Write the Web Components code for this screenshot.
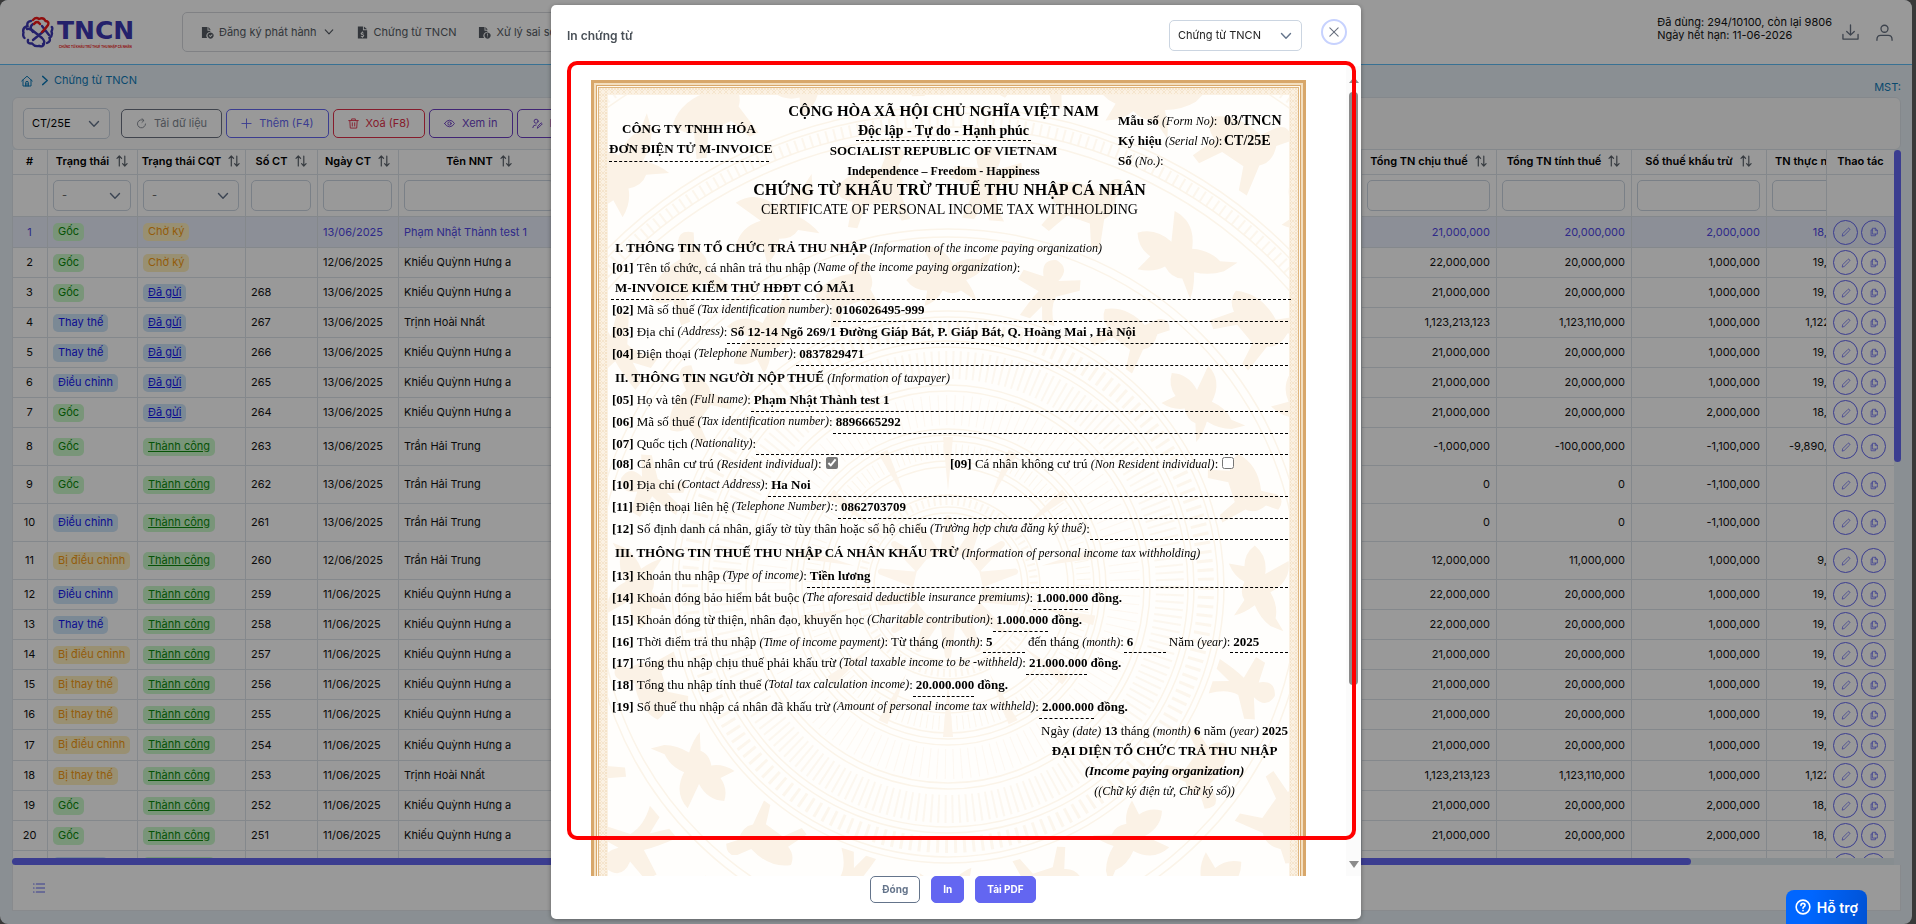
<!DOCTYPE html>
<html lang="vi">
<head>
<meta charset="utf-8">
<meta name="viewport" content="width=device-width, initial-scale=1">
<title>Chứng từ TNCN</title>
<style>
html, body { height: 100%; margin: 0; }
body { background: #606060; font: 11px/13px Inter, "Noto Sans", sans-serif; color: #111; overflow: hidden; }
</style>
</head>
<body>
<tncn-app></tncn-app>

<script>
const define = (name, html, setup) => {
  const tpl = document.createElement('template');
  tpl.innerHTML = `<style>*,*::before,*::after{box-sizing:border-box}button,input,select{font:inherit;margin:0}a{color:inherit;text-decoration:none}svg{display:block;flex:none}</style>${html}`;
  customElements.define(name, class extends HTMLElement {
    connectedCallback() {
      if (this.shadowRoot) return;
      const root = this.attachShadow({ mode: 'open' });
      root.append(tpl.content.cloneNode(true));
      if (setup) setup(this, root);
    }
  });
};

/* ---------- icons ---------- */
const stroke = (vb, d, w = 1) => `<svg viewBox="${vb}" width="100%" height="100%" fill="none" stroke="currentColor" stroke-width="${w}" stroke-linecap="round" stroke-linejoin="round">${d}</svg>`;
const fill = (vb, d) => `<svg viewBox="${vb}" width="100%" height="100%" fill="currentColor" fill-rule="evenodd">${d}</svg>`;
const ICONS = {
  chevron: stroke('0 0 12 12', '<path d="M1.500 3.500L6 8.200l4.500-4.700"/>', 1.4),
  next: stroke('0 0 12 12', '<path d="M4 1.500l5 4.500-5 4.500"/>', 1.6),
  home: stroke('0 0 12 12', '<path d="M.7 6L6 1.200 11.300 6M2 5v6h8V5M4.600 11V7.500q0-1.100 1.400-1.100t1.400 1.100V11M6 8v3"/>', 1),
  reload: stroke('0 0 12 12', '<path d="M8.500 2.700A4.400 4.400 0 1 0 10.400 6.500M6.500.700L8.700 2.700 6.500 4.800"/>', 1),
  plus: stroke('0 0 12 12', '<path d="M6 1v10M1 6h10"/>', 1),
  trash: stroke('0 0 12 12', '<path d="M.8 2.800h10.400M4 2.600V1h4v1.600M2 3l.5 8h7L10 3M4.700 5.200v3.600M7.300 5.200v3.600"/>', 1),
  eye: stroke('0 0 12 12', '<path d="M.6 6Q2.800 2.400 6 2.400T11.400 6Q9.200 9.600 6 9.600T.6 6z"/><circle cx="6" cy="6" r="1.800"/>', 1),
  sign: stroke('0 0 12 12', '<circle cx="4.500" cy="3.500" r="2.200"/><path d="M.8 10.500Q.8 7.500 4.500 7.500M6 10.800l.4-1.800L10 5.200l1.200 1.200L7.600 10z"/>', 1),
  sort: stroke('0 0 12 12', '<path d="M3.300 11V1M1 3.300L3.300 1l2.300 2.300M8.800 1v10M6.600 8.700L8.800 11l2.300-2.300"/>', 1.2),
  download: stroke('0 0 18 18', '<path d="M1 11v5h16v-5M9 1v10.500M5 8l4 3.800L13 8"/>', 1.4),
  user: stroke('0 0 18 18', '<circle cx="9" cy="5" r="3.700"/><path d="M1 17.300v-1q0-4.300 4-4.300h8q4 0 4 4.300v1"/>', 1.4),
  pencil: stroke('0 0 12 12', '<path d="M1.500 10.500l.6-2.600L8.400 1.600q.7-.6 1.400 0l.6.6q.6.7 0 1.400L4.100 9.900z"/>', .9),
  copy: stroke('0 0 12 12', '<path d="M4.500 1.500h3.200l2.300 2.300v4.700H4.500zM7.500 1.600V4h2.400M4.400 3.500H2.500v7h5.200V8.600"/>', .9),
  close: stroke('0 0 12 12', '<path d="M1 1l10 10M11 1L1 11"/>', 1.3),
  list: stroke('0 0 12 12', '<path d="M3.300 2H12M3.300 6H12M3.300 10H12M.5 2h.6M.5 6h.6M.5 10h.6"/>', 1.1),
  docCheck: fill('0 0 14 14', '<path d="M1 1h6v4h3v1.600A4 4 0 0 0 6.500 13H1zM8 1l2.500 3H8z"/><path d="M10.300 7a3.300 3.300 0 1 0 .01 0zM8.500 10.400l.7-.7.9.9 1.700-1.700.7.7-2.400 2.400z"/>'),
  docMoney: fill('0 0 14 14', '<path d="M2 .5h5.500v4H12V13.500H2zM8.500.5L12 3.600H8.500zM6.400 6v.8Q5 7 5 8.200t1.600 1.500q1.200.3 1.200.7t-.9.500q-.8 0-1.400-.4l-.5.8q.6.400 1.400.500v.9h1v-.9q1.500-.2 1.500-1.500T7.300 8.800Q6.200 8.500 6.200 8.200t.8-.4q.7 0 1.200.300l.4-.8q-.5-.3-1.200-.4V6z"/>'),
  docInfo: fill('0 0 14 14', '<path d="M1 1h6v4h3v1.600A4 4 0 0 0 6.500 13H1zM8 1l2.500 3H8z"/><path d="M10.300 7a3.300 3.300 0 1 0 .01 0zM9.900 8.200h.9v2.300h-.9zM9.900 11.200h.9v.9h-.9z"/>'),
  help: stroke('0 0 18 18', '<circle cx="9" cy="9" r="7.700"/><path d="M6.700 7.200q0-2.300 2.300-2.300t2.300 2.100q0 1.200-1.200 1.800-1.100.6-1.100 1.700M9 13v.1"/>', 1.8)
};
define('ui-icon', `<style>:host{display:inline-block;flex:none;width:12px;height:12px}</style>`,
  (el, root) => root.append(document.createRange().createContextualFragment(ICONS[el.getAttribute('name')] || '')));

/* ---------- form pieces ---------- */
define('ui-select', `<style>
  :host{display:block}
  .box{display:grid;align-items:center;height:31px}
  select{grid-area:1/1;width:100%;height:100%;appearance:none;background:#fff;border:1px solid #cbd5e1;border-radius:5px;padding:0 26px 0 8px;color:inherit}
  ui-icon{grid-area:1/1;justify-self:end;margin-right:10px;color:#64748b;pointer-events:none}
</style><div class="box"><select></select><ui-icon name="chevron"></ui-icon></div>`, (el, root) => {
  const s = root.querySelector('select');
  s.setAttribute('aria-label', el.getAttribute('label') || '');
  s.add(new Option(el.getAttribute('value')));
});

define('ui-button', `<style>
  :host{display:block;--c:#6b7280}
  button{display:flex;align-items:center;gap:7px;height:29px;padding:0 14px;border:1px solid var(--c);border-radius:5px;background:#fff;color:var(--t,var(--c));white-space:nowrap}
  ui-icon{width:11px;height:11px}
</style><button type="button"><ui-icon></ui-icon><slot></slot></button>`, (el, root) => {
  const i = document.createElement('ui-icon');
  i.setAttribute('name', el.getAttribute('icon'));
  root.querySelector('ui-icon').replaceWith(i);
});

/* ---------- header ---------- */
define('brand-logo', `<style>
  :host{display:flex;align-items:center;gap:3px}
  .words{display:flex;flex-direction:column}
  b{font:bold 25px/29px "DejaVu Sans",sans-serif;color:#3c37b2}
  small{font:bold 3px/4px Inter,sans-serif;color:#f01818;padding-left:2px;white-space:nowrap}
</style>
<svg viewBox="0 0 32 32" width="32" height="32" fill="none" stroke-width="2.400" stroke-linecap="round">
  <g stroke="#3c37b2">
    <path d="M9 5Q4.500 5.500 5.500 10 0 12 1.500 16.500.5 20 2.500 22M6 24q-1 4 4 3.500Q13 31 17 29.800 21 31.500 22 28M25 27q4-1.500 2.500-5Q31 19.500 29.500 15.500 31 12 29.800 11"/>
    <path d="M11 8q-4 3-1 6l10 8q4 4 1 6M22 15l-11 9M5 13q4-1 6 3M20 10l7 9"/>
  </g>
  <path stroke="#f01818" d="M11 4Q14 .800 17 3q4.500-2 6.500 2 4 .500 2.500 4-2 3-6 7M12 8q3-4 6 0"/>
</svg>
<span class="words"><b>TNCN</b><small>CHỨNG TỪ KHẤU TRỪ THUẾ THU NHẬP CÁ NHÂN</small></span>`);

define('top-bar', `<style>
  :host{display:flex;align-items:center;height:65px;padding:0 19px 0 22px;background:#fff;border-bottom:1px solid #5ebcf5;border-radius:8px 8px 0 0}
  brand-logo{width:160px;flex:none}
  nav{display:flex;align-items:center;flex:0 1 50%;height:40px;padding:0 18px;gap:22px;border:1px solid #d5d8dd;border-radius:5px;color:#555b63}
  nav a{display:flex;align-items:center;gap:5px;white-space:nowrap}
  nav ui-icon{width:13px;height:13px}
  nav ui-icon[name=chevron]{width:10px;height:10px;margin-left:2px}
  .usage{margin:0 10px 0 auto;padding-bottom:7px}
  .usage span{display:block}
  .tools{display:flex;gap:17px;color:#667080}
  .tools button{display:block;border:0;padding:0;background:none;color:inherit}
  .tools ui-icon{width:17px;height:17px;display:block}
</style>
<brand-logo></brand-logo>
<nav>
  <a href="#"><ui-icon name="docCheck"></ui-icon>Đăng ký phát hành<ui-icon name="chevron"></ui-icon></a>
  <a href="#"><ui-icon name="docMoney"></ui-icon>Chứng từ TNCN</a>
  <a href="#"><ui-icon name="docInfo"></ui-icon>Xử lý sai sót</a>
</nav>
<div class="usage"><span>Đã dùng: 294/10100, còn lại 9806</span><span>Ngày hết hạn: 11-06-2026</span></div>
<div class="tools">
  <button aria-label="Tải xuống"><ui-icon name="download"></ui-icon></button>
  <button aria-label="Tài khoản"><ui-icon name="user"></ui-icon></button>
</div>`);

define('crumb-bar', `<style>
  :host{display:flex;align-items:center;height:32px;padding:0 11px 1px 21px;color:#0f7ab8}
  ui-icon[name=next]{width:11px;height:11px;margin:0 4px 0 6px}
  .mst{margin-left:auto;align-self:flex-end;padding-bottom:2px}
  a{display:flex}
</style>
<a href="#" aria-label="Trang chủ"><ui-icon name="home"></ui-icon></a><ui-icon name="next"></ui-icon><a href="#">Chứng từ TNCN</a><span class="mst">MST:</span>`);

/* ---------- toolbar ---------- */
define('grid-toolbar', `<style>
  :host{display:flex;align-items:center;gap:4px;height:53px;padding:0 10px;background:#fbfbfb;border:1px solid #dde3ea;border-radius:6px}
  ui-select{width:87px;margin-right:7px;color:#000}
</style>
<ui-select label="Ký hiệu" value="CT/25E"></ui-select>
<ui-button icon="reload" style="--c:#6b7280;--t:#80868f">Tải dữ liệu</ui-button>
<ui-button icon="plus" style="--c:#6366f1">Thêm (F4)</ui-button>
<ui-button icon="trash" style="--c:#e0304a">Xoá (F8)</ui-button>
<ui-button icon="eye" style="--c:#6d3fc4">Xem in</ui-button>
<ui-button icon="sign" style="--c:#6d3fc4">Ký điện tử</ui-button>`);

/* ---------- data grid ---------- */
define('status-chip', `<style>
  :host{display:inline-block;padding:2px 5px 3px;border-radius:5px;line-height:13px;white-space:nowrap;vertical-align:middle}
  :host([tone=green]){background:#caf9ca;color:#0b8a0b}
  :host([tone=orange]){background:#fff0bf;color:#f59a10}
  :host([tone=blue]){background:#cde4f8;color:#1414f0}
  a{text-decoration:underline}
</style><slot></slot>`, (el, root) => {
  if (!el.hasAttribute('link')) return;
  const a = document.createElement('a');
  a.href = '#';
  a.append(root.querySelector('slot'));
  root.append(a);
});

define('row-actions', `<style>
  :host{display:flex;gap:3px}
  button{display:grid;place-items:center;width:25px;height:25px;padding:0;border:1px solid #6366f1;border-radius:50%;background:none;color:#6366f1}
  ui-icon{width:10px;height:10px}
</style>
<button aria-label="Sửa"><ui-icon name="pencil"></ui-icon></button><button aria-label="Sao chép"><ui-icon name="copy"></ui-icon></button>`);

const K = 'Khiếu Quỳnh Hưng a', T = 'Trần Hải Trung', N = 'Trịnh Hoài Nhất';
const A = ['21,000,000', '20,000,000', '1,000,000', '19,000,000'];
const B = ['21,000,000', '20,000,000', '2,000,000', '18,000,000'];
const C = ['22,000,000', '20,000,000', '1,000,000', '19,000,000'];
const D = ['1,123,213,123', '1,123,110,000', '1,000,000', '1,122,213,123'];
const Z = ['0', '0', '-1,100,000', ''];
const ROWS = [
  ['Gốc', 'Chờ ký', '', '13/06/2025', 'Phạm Nhật Thành test 1', B, 'mid'],
  ['Gốc', 'Chờ ký', '', '12/06/2025', K, C],
  ['Gốc', 'Đã gửi', '268', '13/06/2025', K, A],
  ['Thay thế', 'Đã gửi', '267', '13/06/2025', N, D],
  ['Thay thế', 'Đã gửi', '266', '13/06/2025', K, A],
  ['Điều chỉnh', 'Đã gửi', '265', '13/06/2025', K, A],
  ['Gốc', 'Đã gửi', '264', '13/06/2025', K, B],
  ['Gốc', 'Thành công', '263', '13/06/2025', T, ['-1,000,000', '-100,000,000', '-1,100,000', '-9,890,000,000'], 'tall'],
  ['Gốc', 'Thành công', '262', '13/06/2025', T, Z, 'tall'],
  ['Điều chỉnh', 'Thành công', '261', '13/06/2025', T, Z, 'tall'],
  ['Bị điều chỉnh', 'Thành công', '260', '12/06/2025', T, ['12,000,000', '11,000,000', '1,000,000', '9,900,000'], 'tall'],
  ['Điều chỉnh', 'Thành công', '259', '11/06/2025', K, C],
  ['Thay thế', 'Thành công', '258', '11/06/2025', K, C],
  ['Bị điều chỉnh', 'Thành công', '257', '11/06/2025', K, A],
  ['Bị thay thế', 'Thành công', '256', '11/06/2025', K, A],
  ['Bị thay thế', 'Thành công', '255', '11/06/2025', K, A],
  ['Bị điều chỉnh', 'Thành công', '254', '11/06/2025', K, A, 'mid'],
  ['Bị thay thế', 'Thành công', '253', '11/06/2025', N, D],
  ['Gốc', 'Thành công', '252', '11/06/2025', K, B],
  ['Gốc', 'Thành công', '251', '11/06/2025', K, B],
  ['Thay thế', 'Thành công', '', '', '', ['', '', '', '']]
];
const tone = s => /^Bị|Chờ/.test(s) ? 'orange' : /Gốc|Thành/.test(s) ? 'green' : 'blue';
const chip = s => `<status-chip tone="${tone(s)}"${/Đã|Thành/.test(s) ? ' link' : ''}>${s}</status-chip>`;
const head = s => `<th scope="col"><span>${s}<ui-icon name="sort"></ui-icon></span></th>`;
const box = s => `<td><input type="text" aria-label="Lọc ${s}"></td>`;

define('data-grid', `<style>
  :host{display:grid;grid-template-columns:minmax(0,1fr) 7px;grid-template-rows:minmax(0,1fr) 7px;min-height:0}
  .view{overflow:hidden;border-left:1px solid #dde3ea;background:#fff;min-height:0}
  table{width:calc(100% + 50px);table-layout:fixed;border-spacing:0}
  col.n{width:35px}col.s{width:90px}col.q{width:108px}col.c{width:72px}col.d{width:81px}col.t{width:162px}col.m{width:135px}col.k{width:109px}col.a{width:68px}
  th,td{padding:0 6px 0 5px;border-right:1px solid #dde3ea;border-bottom:1px solid #dde3ea;height:30px;background:#fff;white-space:nowrap;overflow:hidden;text-align:left}
  th{height:25px;font-weight:600;color:#000;padding-bottom:2px}
  th span{display:flex;align-items:center;justify-content:center;gap:7px}
  th ui-icon{width:12px;height:12px;color:#5c636c}
  .filters td{height:42px}
  .filters input{display:block;width:100%;height:31px;border:1px solid #cbd5e1;border-radius:5px;background:#fff;padding:0 8px}
  .mid td{height:31px}
  .tall td{height:38px}
  td:first-child,th:first-child{text-align:center}
  td.r{text-align:right}
  td.k{padding-right:4px}
  th:last-child,td:last-child{position:sticky;right:0;padding-left:6px;border-right:0;border-left:1px solid #dde3ea}
  th:last-child{text-align:center}
  .on td{background:#e9eefc;color:#4f46e5}
  ui-select{color:#666}
  .v span,.h span{display:block;background:#6366f1;border-radius:4px}
  .v span{height:44%}
  .h{background:#e2ebf1}
  .h span{width:calc(100% - 203px);height:7px}
</style>
<div class="view"><table>
  <colgroup><col class="n"><col class="s"><col class="q"><col class="c"><col class="d"><col class="t"><col><col class="m"><col class="m"><col class="m"><col class="k"><col class="a"></colgroup>
  <thead>
    <tr><th scope="col">#</th>${['Trạng thái', 'Trạng thái CQT', 'Số CT', 'Ngày CT', 'Tên NNT'].map(head).join('')}<th></th>${['Tổng TN chịu thuế', 'Tổng TN tính thuế', 'Số thuế khấu trừ', 'TN thực nhận'].map(head).join('')}<th scope="col">Thao tác</th></tr>
    <tr class="filters"><td></td><td><ui-select label="Trạng thái" value="-"></ui-select></td><td><ui-select label="Trạng thái CQT" value="-"></ui-select></td>${['Số CT', 'Ngày CT', 'Tên NNT'].map(box).join('')}<td></td>${['Tổng TN chịu thuế', 'Tổng TN tính thuế', 'Số thuế khấu trừ', 'TN thực nhận'].map(box).join('')}<td></td></tr>
  </thead>
  <tbody>${ROWS.map((r, i) => `<tr class="${r[6] || ''}${i ? '' : ' on'}"><td>${i < 20 ? i + 1 : ''}</td><td>${chip(r[0])}</td><td>${chip(r[1])}</td><td>${r[2]}</td><td>${r[3]}</td><td>${r[4]}</td><td></td>${r[5].map((v, j) => `<td class="r${j > 2 ? ' k' : ''}">${v}</td>`).join('')}<td><row-actions></row-actions></td></tr>`).join('')}</tbody>
</table></div>
<div class="v"><span></span></div>
<div class="h"><span></span></div>`);

define('grid-footer', `<style>
  :host{display:flex;align-items:center;height:46px;padding:0 20px;background:#fff;border:1px solid #e3e7ec;border-top:0}
  button{display:block;border:0;padding:0;background:none;color:#6366f1}
  ui-icon{display:block}
</style><button aria-label="Danh sách"><ui-icon name="list"></ui-icon></button>`);

/* ---------- certificate ---------- */
const drum = () => {
  const ring = (r, w, dash, o = 1) => `<circle r="${r}" stroke-width="${w}"${dash ? ` stroke-dasharray="${dash}"` : ''} opacity="${o}"/>`;
  let s = '<g fill="none" stroke="#fbf4e9">';
  [36, 74, 80, 92, 120, 126, 146, 152, 158, 196, 202, 240, 246, 270, 276, 350, 358, 452, 460, 474, 480, 588, 606].forEach(r => s += ring(r, 1.5));
  s += ring(86, 8, '2 4', .8) + ring(136, 14, '1 5', .8) + ring(177, 30, '1 7', .6) + ring(222, 28, '2 5', .7) + ring(258, 16, '3 6', .8) + ring(466, 12, '2 6', .8) + ring(597, 12, '2 6', .8) + '</g><g fill="#fcf4ea">';
  for (let i = 0; i < 14; i++) s += `<path transform="rotate(${i * 360 / 14})" d="M-8-34L-3-70Q0-74 3-70L8-34zM-5-150L0-96 5-150z"/>`;
  s += '</g><g fill="#fbf2e6">';
  const bird = 'M-32 4Q-24-6-10-4L-20-22Q-4-24 4-8 14-14 24-12L34-18 30-8Q24 0 14 4 20 12 22 20L10 12Q4 16-4 12 -8 20-18 24L-16 12Q-26 12-32 4z';
  const deer = 'M-28-4Q-16-16 4-12L10-22Q16-28 22-20L16-12Q20-2 14 4L18 24 12 24 6 10-10 10-18 24-24 22-18 6Q-26 4-28-4z';
  const man = 'M-12 24Q-8 10-4 2L-22-2-20-10-4-10Q-10-22 2-25 14-22 8-10L24-16 26-8 10 2Q8 12 16 24L6 24 2 12-4 24z';
  [[312, 20, 1.3], [405, 24, 1.5], [530, 30, 1.6]].forEach(([r, n, k], j) => {
    for (let i = 0; i < n; i++) s += `<path transform="rotate(${i * 360 / n + j * 5}) translate(0 ${-r}) scale(${k})" d="${[bird, man, deer, bird, deer][(i + j) % 5]}"/>`;
  });
  return s + '</g>';
};

define('drum-backdrop', `<style>:host{display:block;overflow:hidden}svg{width:100%;height:100%}</style>
<svg viewBox="0 0 715 1011" preserveAspectRatio="xMidYMin slice" aria-hidden="true">
  <defs>
    <pattern id="lace" width="6" height="6" patternUnits="userSpaceOnUse"><path d="M0 3L3 0 6 3 3 6z" fill="none" stroke="#f5e5cd" stroke-width="1"/><circle cx="3" cy="3" r="1" fill="#f2dfc2"/></pattern>
  </defs>
  <rect width="715" height="1011" fill="#fffefc"/>
  <g transform="translate(357 507)">${drum()}</g>
  <path fill="#fbf1e3" fill-rule="evenodd" d="M0 0h715v1011H0zM17 15v981h681V15z"/>
  <path fill="url(#lace)" fill-rule="evenodd" d="M0 0h715v1011H0zM16 14v983h683V14z"/>
  <g fill="none">
    <rect x="1.500" y="1.500" width="712" height="1008" stroke="#d8a76a" stroke-width="3"/>
    <rect x="4" y="4" width="707" height="1003" stroke="#f3dfc0" stroke-width="2"/>
    <rect x="5.500" y="5.500" width="704" height="1000" stroke="#d8a76a" stroke-width="1"/>
    <rect x="6.500" y="6.500" width="702" height="998" stroke="#fffaf1" stroke-width="1"/>
    <rect x="7.500" y="7.500" width="700" height="996" stroke="#dfb67f" stroke-width="1"/>
  </g>
</svg>`);

/* One numbered line: bold number, Vietnamese label, English gloss, dashed value. */
define('doc-line', `<style>
  :host{display:flex;height:22px;line-height:19px;white-space:nowrap}
  :host([short]){height:21px}
  :host([plain]){height:20px}
  b{margin-right:3px}
  i{font-size:12px;margin-left:3px}
  .v{flex:1;font-weight:bold;padding-left:3px;border-bottom:1px dashed #000}
  :host([unit]) .v{flex:none}
  .u{font-weight:bold;padding-left:3px}
  :host([plain]) .v,:host(:not([unit])) .u{display:none}
</style><b></b><span class="l"></span><i></i><span class="p"></span><span class="v"><slot></slot></span><span class="u"></span>`, (el, root) => {
  const q = s => root.querySelector(s);
  q('b').textContent = `[${el.getAttribute('no')}]`;
  q('.l').textContent = el.getAttribute('label');
  q('i').textContent = `(${el.getAttribute('en')})` + (el.getAttribute('mark') || '');
  q('.p').textContent = ':';
  q('.u').textContent = el.getAttribute('unit') || '';
});

define('tax-certificate', `<style>
  :host{display:grid;font:13px/20px "Liberation Serif","Times New Roman",serif;color:#000}
  drum-backdrop{grid-area:1/1}
  .sheet{grid-area:1/1;position:relative;min-height:1011px;padding:21px 18px 0 20px}
  header{display:grid;grid-template-columns:160px minmax(0,1fr) 170px;margin:0 0 0 -2px;font-weight:bold;text-align:center;white-space:nowrap}
  .org{margin-top:18px}
  .org p,.meta p,.nation p{margin:0}
  .org{align-self:start;border-bottom:1px dashed #000;padding-bottom:2px}
  .nation .big{font-size:15px}
  .nation .motto{display:table;margin:0 auto;padding:0 2px;font-size:14px;line-height:19px;border-bottom:1px dashed #000}
  .nation .small{font-size:12px}
  .meta{display:grid;grid-template-columns:104px 1fr;column-gap:2px;align-content:start;margin-top:10px;text-align:left;line-height:19px}
  .meta i{font-size:12px;font-weight:normal}
  .meta span{font-weight:normal}
  .meta strong{font-size:14px}
  h1{margin:0;font-size:16px;line-height:18px;text-align:center}
  .sub{margin:1px 0 18px;font-size:14px;text-align:center}
  h2{margin:0 0 0 4px;font-size:13px;line-height:20px;white-space:nowrap}
  h2.mid{line-height:23px}
  h2.low{line-height:26px}
  h2 i,.pay i,.sign i,.res i{font-size:12px;font-weight:normal}
  section{padding-left:1px}
  .name{margin:0 -3px 0 -1px;padding-left:4px;height:22px;line-height:20px;font-weight:bold;border-bottom:1px dashed #000}
  .res{display:grid;grid-template-columns:1fr 1fr;height:20px;line-height:19px}
  .res label{display:flex;align-items:center;gap:4px;height:18px;white-space:nowrap}
  .res input{width:12px;height:12px;margin:0 0 2px;accent-color:#767676}
  .pay{display:flex;gap:3px;height:21px;line-height:19px;white-space:nowrap}
  .pay .f{font-weight:bold;border-bottom:1px dashed #000;padding-left:3px;margin-left:-3px;width:42px}
  .pay .f.y{flex:1}
  .sign{margin:2px 0 0 auto;width:max-content;min-width:244px;text-align:center}
  .sign p{margin:0}
  .sign em{font-weight:bold}
</style>
<drum-backdrop></drum-backdrop>
<div class="sheet">
  <header>
    <div class="org"><p>CÔNG TY TNHH HÓA</p><p>ĐƠN ĐIỆN TỬ M-INVOICE</p></div>
    <div class="nation">
      <p class="big">CỘNG HÒA XÃ HỘI CHỦ NGHĨA VIỆT NAM</p>
      <p class="motto">Độc lập - Tự do - Hạnh phúc</p>
      <p>SOCIALIST REPUBLIC OF VIETNAM</p>
      <p class="small">Independence – Freedom - Happiness</p>
    </div>
    <div class="meta">
      <p>Mẫu số <i>(Form No)</i><span>:</span></p><strong>03/TNCN</strong>
      <p>Ký hiệu <i>(Serial No)</i><span>:</span></p><strong>CT/25E</strong>
      <p>Số <i>(No.)</i><span>:</span></p>
    </div>
  </header>
  <h1>CHỨNG TỪ KHẤU TRỪ THUẾ THU NHẬP CÁ NHÂN</h1>
  <p class="sub">CERTIFICATE OF PERSONAL INCOME TAX WITHHOLDING</p>

  <h2>I. THÔNG TIN TỔ CHỨC TRẢ THU NHẬP <i>(Information of the income paying organization)</i></h2>
  <section>
    <doc-line no="01" label="Tên tổ chức, cá nhân trả thu nhập" en="Name of the income paying organization" plain></doc-line>
    <div class="name">M-INVOICE KIỂM THỬ HĐĐT CÓ MÃ1</div>
    <doc-line no="02" label="Mã số thuế" en="Tax identification number">0106026495-999</doc-line>
    <doc-line no="03" label="Địa chỉ" en="Address">Số 12-14 Ngõ 269/1 Đường Giáp Bát, P. Giáp Bát, Q. Hoàng Mai , Hà Nội</doc-line>
    <doc-line no="04" label="Điện thoại" en="Telephone Number">0837829471</doc-line>
  </section>
  <h2 class="mid">II. THÔNG TIN NGƯỜI NỘP THUẾ <i>(Information of taxpayer)</i></h2>
  <section>
    <doc-line no="05" label="Họ và tên" en="Full name">Phạm Nhật Thành test 1</doc-line>
    <doc-line no="06" label="Mã số thuế" en="Tax identification number">8896665292</doc-line>
    <doc-line no="07" label="Quốc tịch" en="Nationality" short></doc-line>
    <div class="res">
      <label><span><b>[08]</b> Cá nhân cư trú <i>(Resident individual)</i>:</span><input type="checkbox" checked></label>
      <label><span><b>[09]</b> Cá nhân không cư trú <i>(Non Resident individual)</i>:</span><input type="checkbox"></label>
    </div>
    <doc-line no="10" label="Địa chỉ" en="Contact Address">Ha Noi</doc-line>
    <doc-line no="11" label="Điện thoại liên hệ" en="Telephone Number" mark=":">0862703709</doc-line>
    <doc-line no="12" label="Số định danh cá nhân, giấy tờ tùy thân hoặc số hộ chiếu" en="Trường hợp chưa đăng ký thuế" short></doc-line>
  </section>
  <h2 class="low">III. THÔNG TIN THUẾ THU NHẬP CÁ NHÂN KHẤU TRỪ <i>(Information of personal income tax withholding)</i></h2>
  <section>
    <doc-line no="13" label="Khoản thu nhập" en="Type of income">Tiền lương</doc-line>
    <doc-line no="14" label="Khoản đóng bảo hiểm bắt buộc" en="The aforesaid deductible insurance premiums" unit="đồng.">1.000.000</doc-line>
    <doc-line no="15" label="Khoản đóng từ thiện, nhân đạo, khuyến học" en="Charitable contribution" unit="đồng.">1.000.000</doc-line>
    <div class="pay">
      <span><b>[16]</b> Thời điểm trả thu nhập <i>(Time of income payment)</i>:</span>
      <span>Từ tháng <i>(month)</i>:</span><span class="f">5</span>
      <span>đến tháng <i>(month)</i>:</span><span class="f">6</span>
      <span>Năm <i>(year)</i>:</span><span class="f y">2025</span>
    </div>
    <doc-line no="17" label="Tổng thu nhập chịu thuế phải khấu trừ" en="Total taxable income to be -withheld" unit="đồng.">21.000.000</doc-line>
    <doc-line no="18" label="Tổng thu nhập tính thuế" en="Total tax calculation income" unit="đồng.">20.000.000</doc-line>
    <doc-line no="19" label="Số thuế thu nhập cá nhân đã khấu trừ" en="Amount of personal income tax withheld" unit="đồng.">2.000.000</doc-line>
  </section>
  <div class="sign">
    <p>Ngày <i>(date)</i> <b>13</b> tháng <i>(month)</i> <b>6</b> năm <i>(year)</i> <b>2025</b></p>
    <p><b>ĐẠI DIỆN TỔ CHỨC TRẢ THU NHẬP</b></p>
    <p><em>(Income paying organization)</em></p>
    <p><i>((Chữ ký điện tử, Chữ ký số))</i></p>
  </div>
</div>`);

/* ---------- dialog ---------- */
define('print-dialog', `<style>
  :host{position:fixed;inset:0;display:flex;justify-content:center;padding:5px 4px 5px 0;background:rgba(0,0,0,.4)}
  [role=dialog]{position:relative;display:flex;flex-direction:column;width:100%;max-width:810px;background:#fff;border-radius:5px;box-shadow:0 1px 5px rgba(0,0,0,.35)}
  header{display:flex;align-items:center;height:61px;flex:none;padding:14px 14px 14px 16px}
  h1{margin:0 auto 0 0;font-size:12px;font-weight:600;color:#495057}
  ui-select{width:133px;color:#222}
  .x{align-self:flex-start;display:grid;place-items:center;width:26px;height:26px;margin-left:19px;padding:0;border:2px solid #c7d2fe;border-radius:50%;background:#fff;color:#6b7280}
  .x ui-icon{width:10px;height:10px}
  .body{display:flex;flex:1;min-height:0;overflow:hidden}
  .doc{flex:1;min-width:0;padding:14px 40px 0}
  .bar{display:flex;flex-direction:column;align-items:center;width:15px;padding:11px 0 8px;background:#fbfbfb}
  .bar i{border:5px solid transparent}
  .bar .up{border-top:0;border-bottom:6px solid #8b8b8b}
  .bar .dn{border-bottom:0;border-top:7px solid #8b8b8b;margin-top:auto}
  .bar span{width:9px;flex:0 1 75%;margin-top:9px;background:#8b8b8b;border-radius:4px}
  footer{display:flex;justify-content:center;gap:11px;padding:0 6px 16px 0}
  footer button{height:27px;padding:0 11px;border:1px solid #6366f1;border-radius:5px;background:#6366f1;color:#fff;font-size:10px;font-weight:700}
  footer .ghost{border-color:#64748b;background:#fff;color:#64748b}
  .mark{position:absolute;inset:56px 5px 79px 16px;border:4px solid #f00;border-radius:10px;pointer-events:none}
</style>
<div role="dialog" aria-labelledby="t">
  <header><h1 id="t">In chứng từ</h1><ui-select label="Mẫu in" value="Chứng từ TNCN"></ui-select><button class="x" aria-label="Đóng hộp thoại"><ui-icon name="close"></ui-icon></button></header>
  <div class="body"><div class="doc"><slot></slot></div><div class="bar"><i class="up"></i><span></span><i class="dn"></i></div></div>
  <footer><button class="ghost">Đóng</button><button>In</button><button>Tải PDF</button></footer>
  <div class="mark"></div>
</div>`);

define('help-button', `<style>
  :host{position:fixed;right:49px;bottom:0}
  button{display:flex;align-items:center;gap:6px;height:34px;padding:0 9px;border:0;border-radius:8px 8px 0 0;background:linear-gradient(100deg,#06f 30%,#0052d4);color:#fff;font-size:14px;font-weight:600}
  ui-icon{width:16px;height:16px}
</style><button><ui-icon name="help"></ui-icon>Hỗ trợ</button>`);

/* ---------- page ---------- */
define('tncn-app', `<style>
  :host{display:block;height:100%}
  .window{display:flex;flex-direction:column;height:100%;margin-right:4px;background:#e6eff5;border-radius:8px;overflow:hidden}
  main{display:flex;flex-direction:column;flex:1;min-height:0;padding:0 11px 13px 12px}
  data-grid{flex:1}
</style>
<div class="window">
  <top-bar></top-bar>
  <crumb-bar></crumb-bar>
  <main><grid-toolbar></grid-toolbar><data-grid></data-grid><grid-footer></grid-footer></main>
</div>
<print-dialog><tax-certificate></tax-certificate></print-dialog>
<help-button></help-button>`);
</script>
</body>
</html>
